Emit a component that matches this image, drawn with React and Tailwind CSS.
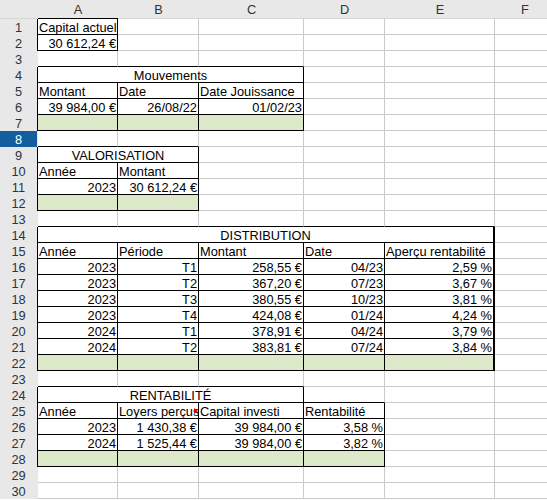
import React from "react";

const COLS = ["A", "B", "C", "D", "E", "F"];

// rows: list of cells { c: start col, s: span, t: text, a: align, box, fill, clip }
const R = (c, t, a = "l", extra = {}) => ({ c, s: 1, t, a, box: true, ...extra });

const rows = {
  1: [R(0, "Capital actuel")],
  2: [R(0, "30 612,24 €", "r")],
  4: [{ c: 0, s: 3, t: "Mouvements", a: "c", box: true }],
  5: [R(0, "Montant"), R(1, "Date"), R(2, "Date Jouissance")],
  6: [R(0, "39 984,00 €", "r"), R(1, "26/08/22", "r"), R(2, "01/02/23", "r")],
  7: [0, 1, 2].map((c) => R(c, "", "l", { fill: true })),
  9: [{ c: 0, s: 2, t: "VALORISATION", a: "c", box: true }],
  10: [R(0, "Année"), R(1, "Montant")],
  11: [R(0, "2023", "r"), R(1, "30 612,24 €", "r")],
  12: [0, 1].map((c) => R(c, "", "l", { fill: true })),
  14: [{ c: 0, s: 5, t: "DISTRIBUTION", a: "c", box: true }],
  15: [R(0, "Année"), R(1, "Période"), R(2, "Montant"), R(3, "Date"), R(4, "Aperçu rentabilité")],
  22: [0, 1, 2, 3, 4].map((c) => R(c, "", "l", { fill: true })),
  24: [{ c: 0, s: 3, t: "RENTABILITÉ", a: "c", box: true }],
  25: [R(0, "Année"), R(1, "Loyers perçus", "l", { clip: true }), R(2, "Capital investi"), R(3, "Rentabilité")],
  26: [R(0, "2023", "r"), R(1, "1 430,38 €", "r"), R(2, "39 984,00 €", "r"), R(3, "3,58 %", "r")],
  27: [R(0, "2024", "r"), R(1, "1 525,44 €", "r"), R(2, "39 984,00 €", "r"), R(3, "3,82 %", "r")],
  28: [0, 1, 2, 3].map((c) => R(c, "", "l", { fill: true })),
};

const distribution = [
  ["2023", "T1", "258,55 €", "04/23", "2,59 %"],
  ["2023", "T2", "367,20 €", "07/23", "3,67 %"],
  ["2023", "T3", "380,55 €", "10/23", "3,81 %"],
  ["2023", "T4", "424,08 €", "01/24", "4,24 %"],
  ["2024", "T1", "378,91 €", "04/24", "3,79 %"],
  ["2024", "T2", "383,81 €", "07/24", "3,84 %"],
];
distribution.forEach((d, i) => {
  rows[16 + i] = d.map((t, c) => R(c, t, "r"));
});

// fill empty spots with plain cells
const table = [];
for (let r = 1; r <= 30; r++) {
  const given = rows[r] || [];
  const cells = [];
  for (let c = 0; c < COLS.length; ) {
    const found = given.find((x) => x.c === c);
    if (found) {
      cells.push(found);
      c += found.s;
    } else {
      cells.push({ c, s: 1, t: "", a: "l", box: false });
      c += 1;
    }
  }
  table.push(cells);
}

const boxed = (r, c) => {
  if (r < 1 || r > 30 || c < 0 || c >= COLS.length) return false;
  const cell = table[r - 1].find((x) => c >= x.c && c < x.c + x.s);
  return cell ? cell.box : false;
};

const spanClass = { 1: "col-span-1", 2: "col-span-2", 3: "col-span-3", 5: "col-span-5" };
const alignClass = { l: "text-left pl-px", r: "text-right pr-px", c: "text-center" };

function Cell({ r, cell }) {
  const last = cell.c + cell.s - 1;
  const right = boxed(r, last) || boxed(r, last + 1);
  const thick = right && last === 4 && r >= 14 && r <= 22;
  const bottom = boxed(r, cell.c) || boxed(r + 1, cell.c);
  return (
    <div
      className={[
        "relative h-4 box-border border-b overflow-hidden whitespace-nowrap leading-[15px] pt-px",
        thick ? "border-r-2" : "border-r",
        right ? "border-r-black" : "border-r-[#cbcbcb]",
        bottom ? "border-b-black" : "border-b-[#cbcbcb]",
        cell.fill ? "bg-[#dde8cb]" : "bg-white",
        spanClass[cell.s],
        alignClass[cell.a],
      ].join(" ")}
    >
      {cell.t}
      {cell.clip && (
        <span className="absolute right-0 top-[5px] w-0 h-0 border-y-[3px] border-y-transparent border-l-[4px] border-l-[#e00000]" />
      )}
    </div>
  );
}

export default function App() {
  return (
    <div
      className="w-[547px] h-[500px] overflow-hidden bg-white text-[12.8px] text-black"
      style={{ fontFamily: '"Liberation Sans", Arial, sans-serif' }}
    >
      <div className="grid grid-cols-[38px_80px_81px_105px_81px_110px_60px] w-[555px]">
        <div className="h-[19px] bg-[#e8e8e8] border-b border-b-[#d6d6d6]" />
        {COLS.map((c, i) => (
          <div
            key={c}
            className={
              "h-[19px] box-border bg-[#e8e8e8] border-b text-center leading-[19px] text-[#333] " +
              (boxed(1, i) ? "border-b-black" : "border-b-[#d6d6d6]")
            }
          >
            {c}
          </div>
        ))}
        {table.map((cells, i) => {
          const r = i + 1;
          const selected = r === 8;
          return (
            <React.Fragment key={r}>
              <div
                className={[
                  "h-4 box-border border-r text-center leading-[17px]",
                  selected ? "bg-[#135e9e] text-white" : "bg-[#e8e8e8] text-[#2a3441]",
                  boxed(r, 0) ? "border-r-black" : "border-r-[#e8e8e8]",
                ].join(" ")}
              >
                {r}
              </div>
              {cells.map((cell) => (
                <Cell key={cell.c} r={r} cell={cell} />
              ))}
            </React.Fragment>
          );
        })}
      </div>
    </div>
  );
}
